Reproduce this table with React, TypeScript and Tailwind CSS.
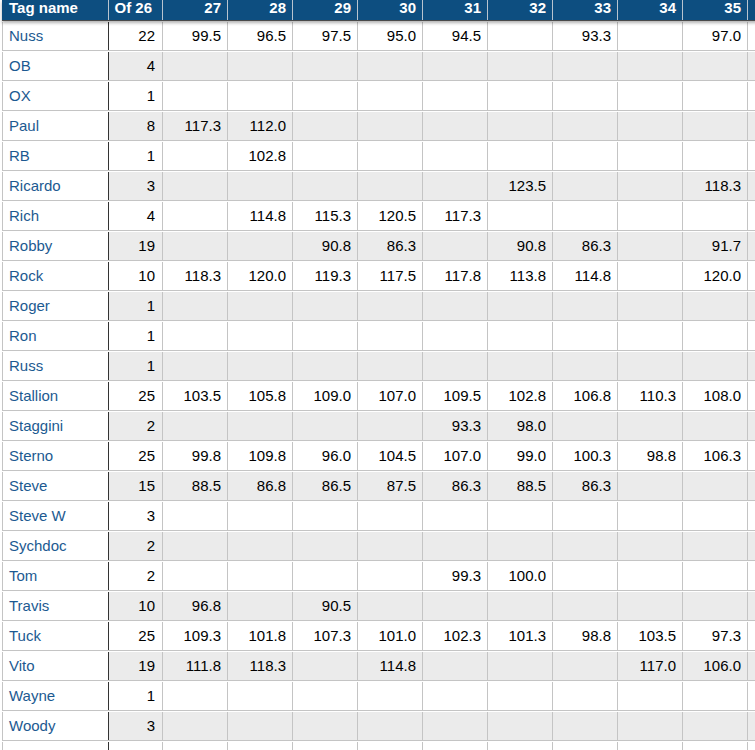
const weeks = ['27', '28', '29', '30', '31', '32', '33', '34', '35', ''];

type Row = { name: string; count: string; scores: string[] };

const rows: Row[] = [
  { name: 'Nuss', count: '22', scores: ['99.5', '96.5', '97.5', '95.0', '94.5', '', '93.3', '', '97.0'] },
  { name: 'OB', count: '4', scores: [] },
  { name: 'OX', count: '1', scores: [] },
  { name: 'Paul', count: '8', scores: ['117.3', '112.0'] },
  { name: 'RB', count: '1', scores: ['', '102.8'] },
  { name: 'Ricardo', count: '3', scores: ['', '', '', '', '', '123.5', '', '', '118.3'] },
  { name: 'Rich', count: '4', scores: ['', '114.8', '115.3', '120.5', '117.3'] },
  { name: 'Robby', count: '19', scores: ['', '', '90.8', '86.3', '', '90.8', '86.3', '', '91.7'] },
  { name: 'Rock', count: '10', scores: ['118.3', '120.0', '119.3', '117.5', '117.8', '113.8', '114.8', '', '120.0'] },
  { name: 'Roger', count: '1', scores: [] },
  { name: 'Ron', count: '1', scores: [] },
  { name: 'Russ', count: '1', scores: [] },
  { name: 'Stallion', count: '25', scores: ['103.5', '105.8', '109.0', '107.0', '109.5', '102.8', '106.8', '110.3', '108.0'] },
  { name: 'Staggini', count: '2', scores: ['', '', '', '', '93.3', '98.0'] },
  { name: 'Sterno', count: '25', scores: ['99.8', '109.8', '96.0', '104.5', '107.0', '99.0', '100.3', '98.8', '106.3'] },
  { name: 'Steve', count: '15', scores: ['88.5', '86.8', '86.5', '87.5', '86.3', '88.5', '86.3'] },
  { name: 'Steve W', count: '3', scores: [] },
  { name: 'Sychdoc', count: '2', scores: [] },
  { name: 'Tom', count: '2', scores: ['', '', '', '', '99.3', '100.0'] },
  { name: 'Travis', count: '10', scores: ['96.8', '', '90.5'] },
  { name: 'Tuck', count: '25', scores: ['109.3', '101.8', '107.3', '101.0', '102.3', '101.3', '98.8', '103.5', '97.3'] },
  { name: 'Vito', count: '19', scores: ['111.8', '118.3', '', '114.8', '', '', '', '117.0', '106.0'] },
  { name: 'Wayne', count: '1', scores: [] },
  { name: 'Woody', count: '3', scores: [] },
  { name: 'Yogi', count: '', scores: [] },
];

export default function App() {
  return (
    <div
      className="h-[750px] w-full overflow-hidden bg-white pl-[2px] text-[15px] text-black"
      style={{ fontFamily: '"Liberation Sans", Arial, Helvetica, sans-serif' }}
    >
      <div className="w-max">
        {/* header */}
        <div className="relative z-10 flex h-[21px] border-b border-[#4a4a4a] bg-[#0d4e80] font-bold leading-[15px] text-white shadow-[0_2px_3px_rgba(0,0,0,0.3)]">
          <div className="w-[107px] shrink-0 border-r border-[#b9c4cf] pl-[7px]">Tag name</div>
          <div className="w-[54px] shrink-0 border-r border-[#b9c4cf] pr-[10px] text-right">Of 26</div>
          {weeks.map((w, j) => (
            <div key={j} className="w-[65px] shrink-0 border-r border-[#b9c4cf] pr-[6px] text-right">
              {w}
            </div>
          ))}
        </div>

        {rows.map((r, i) => {
          const shade = i % 2 === 1 ? 'bg-[#ebebeb]' : 'bg-white';
          return (
            <div key={r.name} className="flex h-[30px] border-b border-[#c4c4c4] pt-px">
              <div className="flex w-[107px] shrink-0 items-center border-l border-r border-l-[#c4c4c4] border-r-[#333333] bg-white pl-[6px] text-[#1c5a91]">
                {r.name}
              </div>
              <div className={`flex w-[54px] shrink-0 items-center justify-end border-r border-[#c4c4c4] pr-[7px] ${shade}`}>
                {r.count}
              </div>
              {weeks.map((_, j) => (
                <div
                  key={j}
                  className={`flex w-[65px] shrink-0 items-center justify-end border-r border-[#c4c4c4] pr-[6px] ${shade}`}
                >
                  {r.scores[j] ?? ''}
                </div>
              ))}
            </div>
          );
        })}
      </div>
    </div>
  );
}
